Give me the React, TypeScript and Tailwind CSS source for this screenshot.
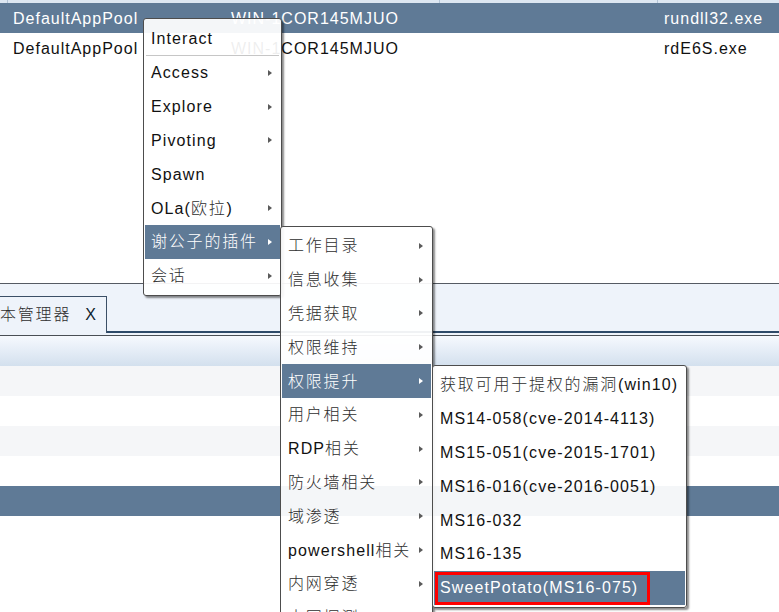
import React from "react";

const FONT = "font-['Liberation_Sans','Noto_Sans_CJK_SC',sans-serif]";

function T({ s, light }: { s: string; light?: boolean }) {
  const parts = s.split(/([\u3400-\u9fff]+)/).filter((p) => p.length > 0);
  return (
    <>
      {parts.map((p, i) =>
        /[\u3400-\u9fff]/.test(p) ? (
          <span key={i} className={`tracking-[1.8px] font-light ${light ? "text-white" : "text-[#2e2e2e]"}`}>
            {p}
          </span>
        ) : (
          <span key={i} className="tracking-[1.1px]">
            {p}
          </span>
        )
      )}
    </>
  );
}

type Item = { t: string; arrow?: boolean; hl?: boolean; sep?: boolean; red?: boolean; h?: string };

function Arrow({ light }: { light?: boolean }) {
  return (
    <span
      className={`ml-auto mr-[8px] h-0 w-0 border-y-[3.5px] border-y-transparent border-l-[4px] ${
        light ? "border-l-white" : "border-l-[#5a5a5a]"
      }`}
    />
  );
}

function Menu({ items, className }: { items: Item[]; className: string }) {
  return (
    <div
      className={`absolute overflow-hidden rounded-[3px] border border-[#4d4d4d] bg-white/[0.93] px-[1px] pt-[2px] pb-[2px] shadow-[2px_2px_2px_rgba(0,0,0,0.45)] ${className}`}
    >
      {items.map((it, i) => (
        <React.Fragment key={i}>
          <div
            className={`relative flex items-center pl-[6px] text-[16px] ${it.h ?? "h-[33.8px]"} ${
              it.hl ? "bg-[#5f7a96] text-white" : "text-[#111]"
            }`}
          >
            <span className="whitespace-nowrap pt-[1px]">
              <T s={it.t} light={it.hl} />
            </span>
            {it.arrow && <Arrow light={it.hl} />}
            {it.red && (
              <div className="absolute left-[1px] top-[1px] h-[33px] w-[215px] border-[3px] border-[#ff0000]" />
            )}
          </div>
          {it.sep && <div className="mx-[1px] h-px bg-[#c6c6c6]" />}
        </React.Fragment>
      ))}
    </div>
  );
}

const m1: Item[] = [
  { t: "Interact", sep: true, h: "h-[34px]" },
  { t: "Access", arrow: true },
  { t: "Explore", arrow: true },
  { t: "Pivoting", arrow: true },
  { t: "Spawn" },
  { t: "OLa(欧拉)", arrow: true },
  { t: "谢公子的插件", arrow: true, hl: true },
  { t: "会话", arrow: true },
];

const m2: Item[] = [
  { t: "工作目录", arrow: true },
  { t: "信息收集", arrow: true },
  { t: "凭据获取", arrow: true },
  { t: "权限维持", arrow: true },
  { t: "权限提升", arrow: true, hl: true },
  { t: "用户相关", arrow: true },
  { t: "RDP相关", arrow: true },
  { t: "防火墙相关", arrow: true },
  { t: "域渗透", arrow: true },
  { t: "powershell相关", arrow: true },
  { t: "内网穿透", arrow: true },
  { t: "内网探测", arrow: true },
];

const m3: Item[] = [
  { t: "获取可用于提权的漏洞(win10)" },
  { t: "MS14-058(cve-2014-4113)" },
  { t: "MS15-051(cve-2015-1701)" },
  { t: "MS16-016(cve-2016-0051)" },
  { t: "MS16-032" },
  { t: "MS16-135" },
  { t: "SweetPotato(MS16-075)", hl: true, red: true },
];

function Row({ cells, selected }: { cells: string[]; selected?: boolean }) {
  return (
    <div
      className={`flex h-[30px] items-center pt-[1px] text-[16px] tracking-[1px] ${
        selected ? "bg-[#5f7a96] text-white" : "bg-white text-[#111]"
      }`}
    >
      <div className="w-[231px] pl-[13px]">{cells[0]}</div>
      <div className="w-[433px]">{cells[1]}</div>
      <div className="flex-1">{cells[2]}</div>
    </div>
  );
}

export default function App() {
  return (
    <div className={`relative h-[612px] w-[779px] overflow-hidden bg-white ${FONT}`}>
      {/* top table header edge */}
      <div className="flex h-[3px] bg-[#dde7f2]">
        <div className="w-[8px] border-r border-[#b3c4d6]" />
        <div className="w-[432px] border-r border-[#b3c4d6]" />
        <div className="w-[218px] border-r border-[#b3c4d6]" />
        <div className="flex-1" />
      </div>
      <Row cells={["DefaultAppPool", "WIN-1COR145MJUO", "rundll32.exe"]} selected />
      <Row cells={["DefaultAppPool", "WIN-1COR145MJUO", "rdE6S.exe"]} />
      <div className="h-[220px]" />

      {/* tab bar */}
      <div className="border-t border-[#555b63] bg-[#eef3fa] pt-[12px]">
        <div className="flex h-[37px]">
          <div className="flex w-[107px] items-center border-t border-r border-[#3b4f66] pb-[1px] text-[16px]">
            <span className="font-light tracking-[1.8px] text-[#2e2e2e]">本管理器</span>
            <span className="ml-[14px] text-[#0f1e2e]">X</span>
          </div>
          <div className="flex-1 border-b-2 border-[#2e4a68]" />
        </div>
        <div className="h-[2px]" />
      </div>
      <div className="h-[31px] border-t border-[#4a4f55] bg-gradient-to-b from-[#f6f9fe] to-[#d3e0ee]" />
      <div className="h-[30px] bg-[#f5f6f8]" />
      <div className="h-[30px] bg-white" />
      <div className="h-[30px] bg-[#f5f6f8]" />
      <div className="h-[30px] bg-white" />
      <div className="h-[30px] bg-[#5f7a96]" />
      <div className="h-[96px] bg-white" />

      {/* context menus */}
      <Menu items={m1} className="left-[143px] top-[18px] w-[139px]" />
      <Menu items={m2} className="left-[280px] top-[226px] w-[153px] h-[420px]" />
      <Menu items={m3} className="left-[432px] top-[365px] w-[255px]" />
    </div>
  );
}
